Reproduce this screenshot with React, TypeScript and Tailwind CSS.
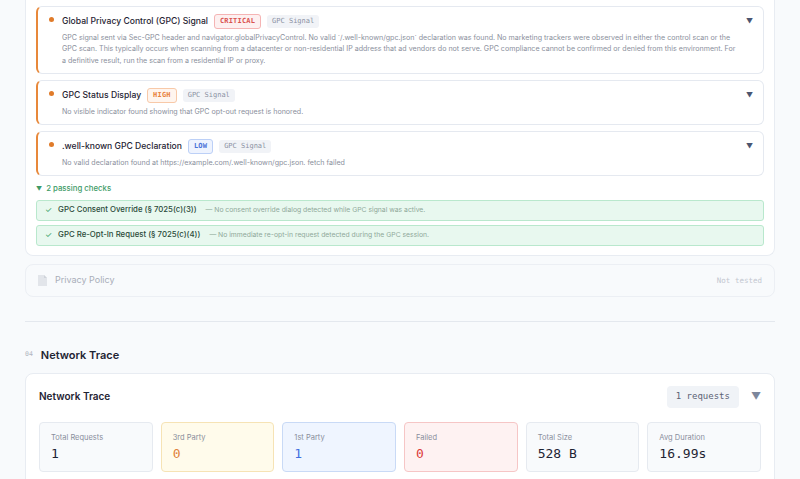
import React from "react";

const sans = { fontFamily: "Inter, 'Noto Sans', sans-serif" };
const mono = "font-[family-name:DejaVu_Sans_Mono]";

function Finding({ title, sev, sevCls, desc }: { title: string; sev: string; sevCls: string; desc: React.ReactNode }) {
  return (
    <div className="relative rounded-md border border-[#e5e9f0] border-l-2 border-l-[#e8883a] bg-white pl-[24px] pr-[10px] pt-[7px] pb-[7px]">
      <span className="absolute left-[11px] top-[10px] h-[5px] w-[5px] rounded-full bg-[#e07b2a]" />
      <span className="absolute right-[10px] top-[10px] text-[7px] text-[#4b5570]">▼</span>
      <div className="flex items-center gap-[6px]">
        <span className="text-[8.6px] font-medium text-[#1f2433]">{title}</span>
        <span className={`rounded-[3px] border px-[5px] py-[1px] text-[7px] font-bold tracking-wide ${mono} ${sevCls}`}>{sev}</span>
        <span className={`rounded-[3px] bg-[#f1f3f7] px-[5px] py-[1px] text-[7px] text-[#8a91a2] ${mono}`}>GPC Signal</span>
      </div>
      <div className="mt-[3px] pr-[14px] text-[7.1px] leading-[11.5px] text-[#8a8f9c]">{desc}</div>
    </div>
  );
}

function Pass({ t, d }: { t: string; d: string }) {
  return (
    <div className="flex h-[21px] items-center gap-[6px] rounded-[3px] border border-[#b9e8cd] bg-[#e8f8ef] px-[8px]">
      <span className="text-[8px] text-[#3aa36a]">✓</span>
      <span className="text-[7.8px] font-medium text-[#2a4a39]">{t}</span>
      <span className="ml-[3px] text-[6.8px] text-[#8fa89a]">— {d}</span>
    </div>
  );
}

function Stat({ label, value, cls, vcls }: { label: string; value: string; cls: string; vcls: string }) {
  return (
    <div className={`flex-1 rounded-[4px] border px-[11px] pt-[9px] h-[50px] ${cls}`}>
      <div className="text-[7.5px] text-[#8a8f9c]">{label}</div>
      <div className={`mt-[1px] text-[13px] ${mono} ${vcls}`}>{value}</div>
    </div>
  );
}

export default function App() {
  return (
    <div className="h-[479px] w-[800px] overflow-hidden bg-[#f8fafc]" style={sans}>
      <div className="mx-[25px] rounded-b-lg border-x border-b border-[#e8ecf2] bg-white px-[10px] pt-[6px] pb-[9px]">
        <div className="flex flex-col gap-[6px]">
          <Finding
            title="Global Privacy Control (GPC) Signal"
            sev="CRITICAL"
            sevCls="border-[#f5b4b4] bg-[#fdf0f0] text-[#d9534f]"
            desc="GPC signal sent via Sec-GPC header and navigator.globalPrivacyControl. No valid `/.well-known/gpc.json` declaration was found. No marketing trackers were observed in either the control scan or the GPC scan. This typically occurs when scanning from a datacenter or non-residential IP address that ad vendors do not serve. GPC compliance cannot be confirmed or denied from this environment. For a definitive result, run the scan from a residential IP or proxy."
          />
          <Finding title="GPC Status Display" sev="HIGH" sevCls="border-[#f8c9a8] bg-[#fff5ee] text-[#e8823c]" desc="No visible indicator found showing that GPC opt-out request is honored." />
          <Finding title=".well-known GPC Declaration" sev="LOW" sevCls="border-[#bcd0f7] bg-[#eef3fe] text-[#4a72d8]" desc="No valid declaration found at https://example.com/.well-known/gpc.json. fetch failed" />
        </div>
        <div className="mt-[7px] flex items-center gap-[4px] text-[7.8px] font-medium text-[#3d9a66]">
          <span className="text-[6px]">▼</span>2 passing checks
        </div>
        <div className="mt-[5px] flex flex-col gap-[4px]">
          <Pass t="GPC Consent Override (§ 7025(c)(3))" d="No consent override dialog detected while GPC signal was active." />
          <Pass t="GPC Re-Opt-In Request (§ 7025(c)(4))" d="No immediate re-opt-in request detected during the GPC session." />
        </div>
      </div>

      <div className="mx-[25px] mt-[8px] flex h-[33px] items-center justify-between rounded-lg border border-[#eceff4] bg-[#f8fafc] px-[12px]">
        <div className="flex items-center gap-[8px]">
          <svg width="9" height="11" viewBox="0 0 9 11"><path d="M0 0h6l3 3v8H0z" fill="#e2e5ea" /><path d="M6 0v3h3" fill="#cfd3da" /></svg>
          <span className="text-[9px] text-[#a9aeb9]">Privacy Policy</span>
        </div>
        <span className={`text-[7.5px] text-[#c3c7d0] ${mono}`}>Not tested</span>
      </div>

      <div className="mx-[25px] mt-[24px] h-px bg-[#e4e8ee]" />

      <div className="mx-[25px] mt-[25px] flex items-center gap-[8px]">
        <span className={`text-[6.5px] text-[#b0b5c0] ${mono}`}>04</span>
        <span className="text-[11px] font-semibold text-[#1f2433]">Network Trace</span>
      </div>

      <div className="mx-[25px] mt-[10px] rounded-lg border border-[#e8ecf2] bg-white px-[13px] pt-[12px] pb-[14px]">
        <div className="flex items-center justify-between">
          <span className="text-[10px] font-semibold text-[#1f2433]">Network Trace</span>
          <div className="flex items-center gap-[12px]">
            <span className={`rounded-[4px] bg-[#f0f3f7] px-[9px] py-[4px] text-[9px] text-[#5b6275] ${mono}`}>1 requests</span>
            <span className="text-[10px] text-[#7d879c]">▼</span>
          </div>
        </div>
        <div className="mt-[14px] flex gap-[8px]">
          <Stat label="Total Requests" value="1" cls="border-[#e6eaf0] bg-[#f8fafc]" vcls="text-[#1f2433]" />
          <Stat label="3rd Party" value="0" cls="border-[#f6e3b5] bg-[#fffbeb]" vcls="text-[#e0813c]" />
          <Stat label="1st Party" value="1" cls="border-[#c9daf6] bg-[#eff5ff]" vcls="text-[#3f6fe0]" />
          <Stat label="Failed" value="0" cls="border-[#f6c6c6] bg-[#fef2f2]" vcls="text-[#dc3b3b]" />
          <Stat label="Total Size" value="528 B" cls="border-[#e6eaf0] bg-[#f8fafc]" vcls="text-[#1f2433]" />
          <Stat label="Avg Duration" value="16.99s" cls="border-[#e6eaf0] bg-[#f8fafc]" vcls="text-[#1f2433]" />
        </div>
      </div>
    </div>
  );
}
